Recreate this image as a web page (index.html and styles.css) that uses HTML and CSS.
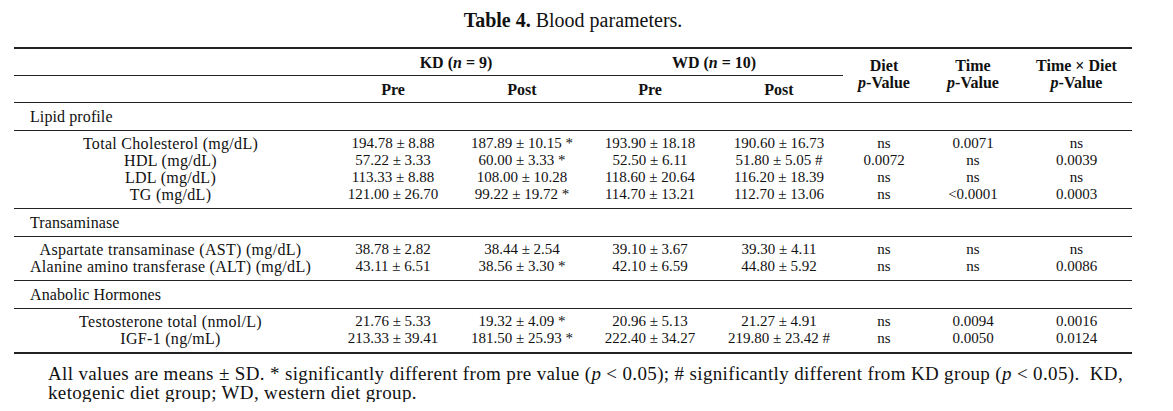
FILE: index.html
```html
<!DOCTYPE html>
<html lang="en">
<head>
<meta charset="utf-8">
<title>Table 4. Blood parameters.</title>
<link rel="stylesheet" href="styles.css">
</head>
<body>
<div class="page">
  <div class="caption"><b>Table 4.</b> Blood parameters.</div>
  <table class="tbl">
    <colgroup>
      <col class="c-label">
      <col class="c-kdpre">
      <col class="c-kdpost">
      <col class="c-wdpre">
      <col class="c-wdpost">
      <col class="c-diet">
      <col class="c-time">
      <col class="c-td">
    </colgroup>
    <thead>
      <tr class="h1">
        <th class="rule-mid"></th>
        <th class="rule-mid" colspan="2">KD (<i>n</i> = 9)</th>
        <th class="rule-mid" colspan="2">WD (<i>n</i> = 10)</th>
        <th class="pcol" rowspan="2">Diet<br><i>p</i>-Value</th>
        <th class="pcol" rowspan="2">Time<br><i>p</i>-Value</th>
        <th class="pcol" rowspan="2">Time × Diet<br><i>p</i>-Value</th>
      </tr>
      <tr class="h2">
        <th></th>
        <th>Pre</th>
        <th>Post</th>
        <th>Pre</th>
        <th>Post</th>
      </tr>
    </thead>
    <tbody>
      <tr class="sec"><td colspan="8">Lipid profile</td></tr>
      <tr class="first"><td class="lbl">Total Cholesterol (mg/dL)</td><td>194.78 ± 8.88</td><td>187.89 ± 10.15 *</td><td>193.90 ± 18.18</td><td>190.60 ± 16.73</td><td>ns</td><td>0.0071</td><td>ns</td></tr>
      <tr><td class="lbl">HDL (mg/dL)</td><td>57.22 ± 3.33</td><td>60.00 ± 3.33 *</td><td>52.50 ± 6.11</td><td>51.80 ± 5.05 #</td><td>0.0072</td><td>ns</td><td>0.0039</td></tr>
      <tr><td class="lbl">LDL (mg/dL)</td><td>113.33 ± 8.88</td><td>108.00 ± 10.28</td><td>118.60 ± 20.64</td><td>116.20 ± 18.39</td><td>ns</td><td>ns</td><td>ns</td></tr>
      <tr class="last"><td class="lbl">TG (mg/dL)</td><td>121.00 ± 26.70</td><td>99.22 ± 19.72 *</td><td>114.70 ± 13.21</td><td>112.70 ± 13.06</td><td>ns</td><td>&lt;0.0001</td><td>0.0003</td></tr>
      <tr class="sec"><td colspan="8">Transaminase</td></tr>
      <tr class="first"><td class="lbl">Aspartate transaminase (AST) (mg/dL)</td><td>38.78 ± 2.82</td><td>38.44 ± 2.54</td><td>39.10 ± 3.67</td><td>39.30 ± 4.11</td><td>ns</td><td>ns</td><td>ns</td></tr>
      <tr class="last"><td class="lbl">Alanine amino transferase (ALT) (mg/dL)</td><td>43.11 ± 6.51</td><td>38.56 ± 3.30 *</td><td>42.10 ± 6.59</td><td>44.80 ± 5.92</td><td>ns</td><td>ns</td><td>0.0086</td></tr>
      <tr class="sec"><td colspan="8">Anabolic Hormones</td></tr>
      <tr class="first"><td class="lbl">Testosterone total (nmol/L)</td><td>21.76 ± 5.33</td><td>19.32 ± 4.09 *</td><td>20.96 ± 5.13</td><td>21.27 ± 4.91</td><td>ns</td><td>0.0094</td><td>0.0016</td></tr>
      <tr class="last end"><td class="lbl">IGF-1 (ng/mL)</td><td>213.33 ± 39.41</td><td>181.50 ± 25.93 *</td><td>222.40 ± 34.27</td><td>219.80 ± 23.42 #</td><td>ns</td><td>0.0050</td><td>0.0124</td></tr>
    </tbody>
  </table>
  <p class="note">All values are means ± SD. * significantly different from pre value (<i>p</i> &lt; 0.05); # significantly different from KD group (<i>p</i> &lt; 0.05).&nbsp; KD,<br>ketogenic diet group; WD, western diet group.</p>
</div>
</body>
</html>
```

FILE: styles.css
```css
html, body {
  margin: 0;
  padding: 0;
  background: #ffffff;
}

body {
  font-family: "Liberation Serif", "Times New Roman", serif;
  color: #111111;
}

.page {
  padding: 9px 0 0 14px;
  width: 1118px;
}

.caption {
  font-size: 20px;
  line-height: 22px;
  text-align: center;
  margin-bottom: 16px;
}

.tbl {
  width: 1118px;
  table-layout: fixed;
  border-collapse: separate;
  border-spacing: 0;
  font-size: 15px;
  line-height: 17px;
}

.c-label { width: 313px; }
.c-kdpre { width: 132px; }
.c-kdpost { width: 126px; }
.c-wdpre { width: 130px; }
.c-wdpost { width: 128px; }
.c-diet { width: 82px; }
.c-time { width: 96px; }
.c-td { width: 111px; }

.tbl th,
.tbl td {
  padding: 0;
  text-align: center;
  white-space: nowrap;
}

.tbl th {
  font-weight: bold;
  font-size: 16px;
}

.h1 th {
  border-top: 2px solid #222222;
  padding-top: 5px;
  padding-bottom: 4px;
}

.h1 th.rule-mid {
  border-bottom: 1px solid #222222;
}

.h1 th.pcol {
  border-bottom: 1px solid #222222;
  vertical-align: top;
  padding-top: 8px;
  padding-bottom: 0;
}

.h2 th {
  padding-top: 5px;
  padding-bottom: 4px;
  border-bottom: 1px solid #222222;
}

.sec td {
  text-align: left;
  font-size: 16px;
  letter-spacing: 0.1px;
  padding: 5px 0 5px 16px;
  border-bottom: 1px solid #222222;
}

.tbl td.lbl {
  font-size: 16px;
  letter-spacing: 0.3px;
}

.first td {
  padding-top: 4px;
}

.last td {
  padding-bottom: 5px;
  border-bottom: 1px solid #222222;
}

.end td {
  border-bottom: 2px solid #222222;
}

.note {
  margin: 10px 0 0 34px;
  width: 1090px;
  font-size: 19px;
  line-height: 19px;
  letter-spacing: 0.35px;
}
```
